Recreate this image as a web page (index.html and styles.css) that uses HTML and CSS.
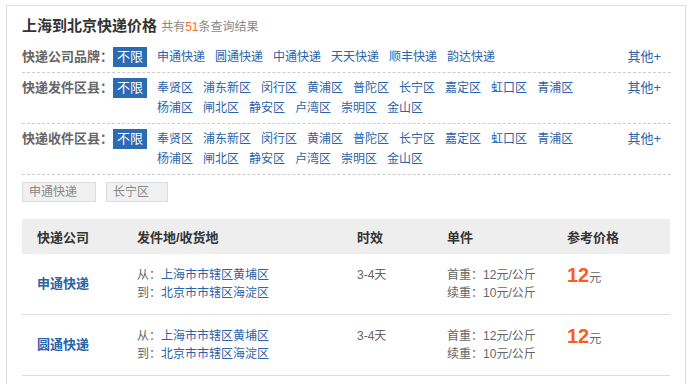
FILE: index.html
```html
<!DOCTYPE html>
<html lang="zh-CN">
<head>
    <meta charset="UTF-8">
    <title>上海到北京快递价格</title>
    <link rel="stylesheet" href="styles.css">
</head>
<body>
    <div class="box">
        <h1 class="title">上海到北京快递价格 <span class="count">共有<em>51</em>条查询结果</span></h1>

        <div class="filter">
            <span class="label">快递公司品牌<i class="colon">：</i></span>
            <span class="all">不限</span>
            <div class="links">
                <a href="#">申通快递</a><a href="#">圆通快递</a><a href="#">中通快递</a><a href="#">天天快递</a><a href="#">顺丰快递</a><a href="#">韵达快递</a>
            </div>
            <a class="more" href="#">其他+</a>
        </div>

        <div class="filter">
            <span class="label">快递发件区县<i class="colon">：</i></span>
            <span class="all">不限</span>
            <div class="links">
                <a href="#">奉贤区</a><a href="#">浦东新区</a><a href="#">闵行区</a><a href="#">黄浦区</a><a href="#">普陀区</a><a href="#">长宁区</a><a href="#">嘉定区</a><a href="#">虹口区</a><a href="#">青浦区</a><a href="#">杨浦区</a><a href="#">闸北区</a><a href="#">静安区</a><a href="#">卢湾区</a><a href="#">崇明区</a><a href="#">金山区</a>
            </div>
            <a class="more" href="#">其他+</a>
        </div>

        <div class="filter">
            <span class="label">快递收件区县<i class="colon">：</i></span>
            <span class="all">不限</span>
            <div class="links">
                <a href="#">奉贤区</a><a href="#">浦东新区</a><a href="#">闵行区</a><a href="#">黄浦区</a><a href="#">普陀区</a><a href="#">长宁区</a><a href="#">嘉定区</a><a href="#">虹口区</a><a href="#">青浦区</a><a href="#">杨浦区</a><a href="#">闸北区</a><a href="#">静安区</a><a href="#">卢湾区</a><a href="#">崇明区</a><a href="#">金山区</a>
            </div>
            <a class="more" href="#">其他+</a>
        </div>

        <div class="selected">
            <span class="tag">申通快递</span>
            <span class="tag">长宁区</span>
        </div>

        <table class="prices">
            <thead>
                <tr>
                    <th class="c1">快递公司</th>
                    <th class="c2">发件地/收货地</th>
                    <th class="c3">时效</th>
                    <th class="c4">单件</th>
                    <th class="c5">参考价格</th>
                </tr>
            </thead>
            <tbody>
                <tr>
                    <td class="company"><a href="#">申通快递</a></td>
                    <td>从<i class="colon">：</i><a href="#">上海市市辖区黄埔区</a><br>到<i class="colon">：</i><a href="#">北京市市辖区海淀区</a></td>
                    <td>3-4天</td>
                    <td>首重<i class="colon">：</i>12元/公斤<br>续重<i class="colon">：</i>10元/公斤</td>
                    <td><span class="price">12</span>元</td>
                </tr>
                <tr>
                    <td class="company"><a href="#">圆通快递</a></td>
                    <td>从<i class="colon">：</i><a href="#">上海市市辖区黄埔区</a><br>到<i class="colon">：</i><a href="#">北京市市辖区海淀区</a></td>
                    <td>3-4天</td>
                    <td>首重<i class="colon">：</i>12元/公斤<br>续重<i class="colon">：</i>10元/公斤</td>
                    <td><span class="price">12</span>元</td>
                </tr>
            </tbody>
        </table>
    </div>
</body>
</html>
```

FILE: styles.css
```css
* {
    margin: 0;
    padding: 0;
    box-sizing: border-box;
}

body {
    font-family: "Liberation Sans", "Noto Sans CJK SC", sans-serif;
    font-size: 12px;
    color: #666;
    background: #fff;
}

a {
    color: #2b63a8;
    text-decoration: none;
}

/* full-width colon centred in its box, like the original */
.colon {
    font-style: normal;
    line-height: 1;
    font-family: "Noto Sans CJK TC", sans-serif;
}

.box {
    width: 680px;
    min-height: 379px;
    margin: 5px 0 0 6px;
    padding: 8px 14px 0 15px;
    border: 1px solid #ddd;
    border-bottom: none;
}

.title {
    font-size: 15px;
    line-height: 24px;
    color: #333;
    margin-bottom: 3px;
}

.count {
    font-size: 12px;
    font-weight: normal;
    color: #888;
}

.count em {
    font-style: normal;
    color: #ff6a2a;
}

/* filter rows */
.filter {
    display: flex;
    align-items: flex-start;
    padding: 5px 0;
    border-bottom: 1px dashed #ccc;
    line-height: 20px;
}

.label {
    width: 91px;
    font-size: 13px;
    font-weight: bold;
    color: #666;
    white-space: nowrap;
    flex-shrink: 0;
}

.all {
    width: 34px;
    height: 20px;
    background: #2b6bb1;
    color: #fff;
    text-align: center;
    font-size: 13px;
    flex-shrink: 0;
}

.links {
    width: 460px;
    padding-left: 10px;
    display: flex;
    flex-wrap: wrap;
}

.links a {
    margin-right: 10px;
}

.more {
    margin-left: auto;
    margin-right: 10px;
    font-size: 13px;
}

/* selected conditions */
.selected {
    display: flex;
    gap: 10px;
    margin-top: 7px;
}

.tag {
    height: 20px;
    line-height: 18px;
    padding: 0 18px 0 6px;
    background: #f0f0f0;
    border: 1px solid #ddd;
    color: #888;
}

/* price table */
.prices {
    width: 648px;
    margin-top: 17px;
    border-collapse: collapse;
}

.prices th {
    height: 35px;
    background: #eee;
    text-align: left;
    padding-left: 15px;
    font-size: 13px;
    color: #333;
}

.prices td {
    padding: 12px 0 12px 15px;
    line-height: 18px;
    vertical-align: top;
    border-bottom: 1px solid #ddd;
}

.prices td.company {
    vertical-align: middle;
    font-size: 13px;
    font-weight: bold;
}

.c1 { width: 100px; }
.c2 { width: 220px; }
.c3 { width: 90px; }
.c4 { width: 120px; }

.price {
    font-size: 20px;
    font-weight: bold;
    color: #ff5a1f;
    line-height: 18px;
}
```
